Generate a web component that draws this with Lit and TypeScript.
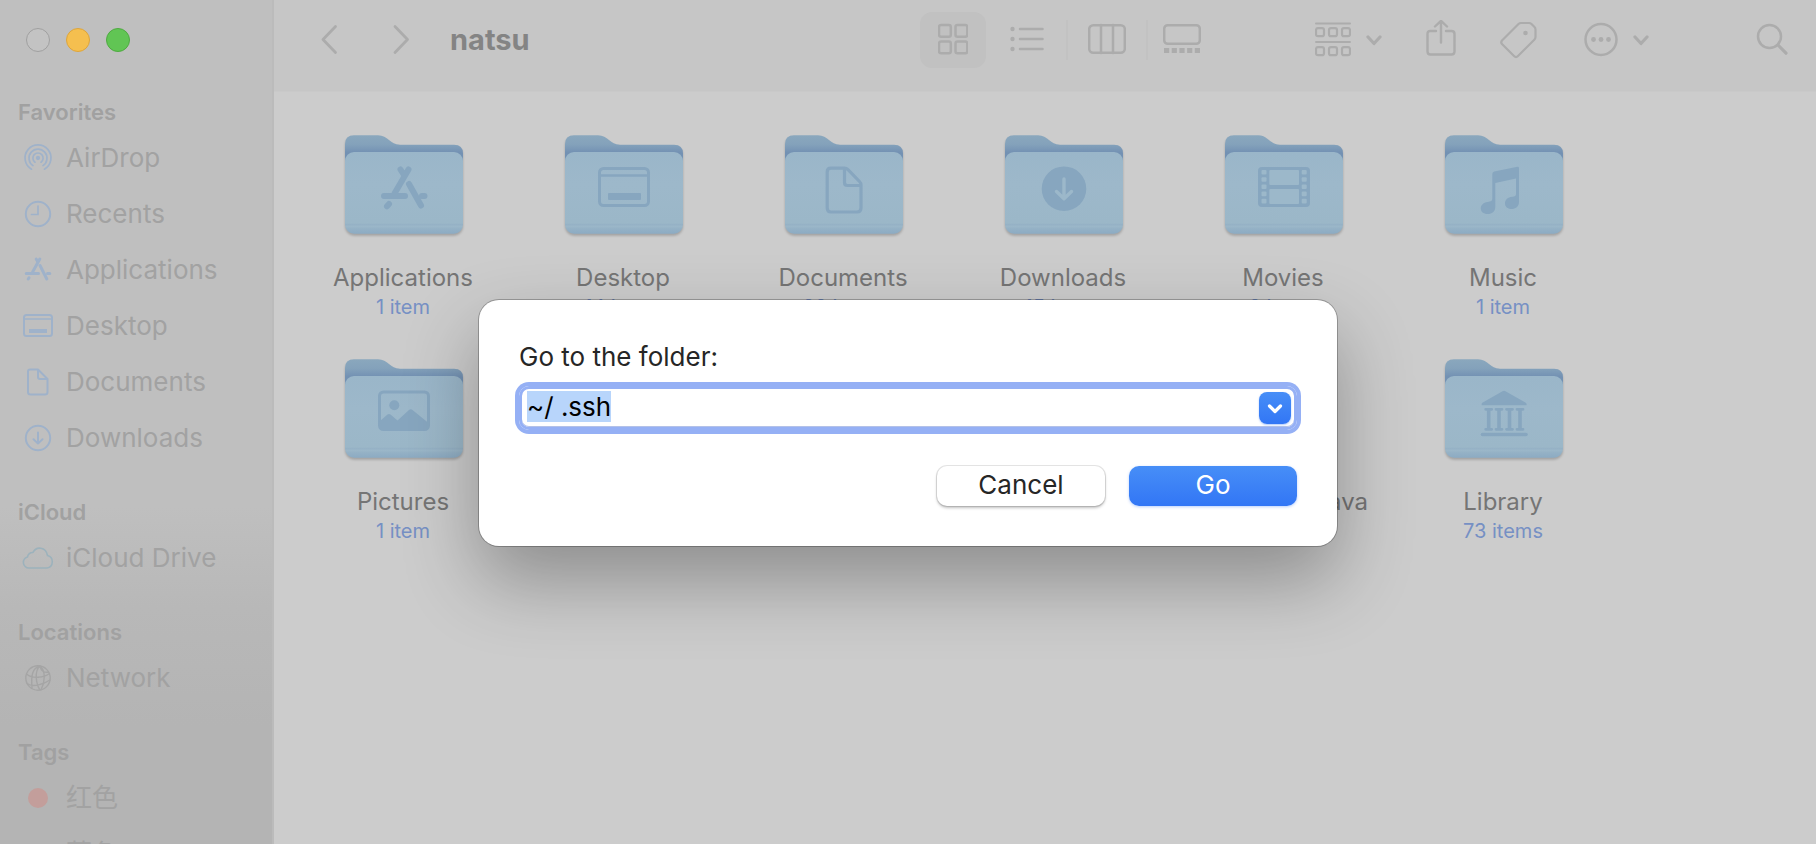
import { LitElement, html, svg, css, nothing } from "lit";
import { customElement, query } from "lit/decorators.js";

const appGlyph = svg`
  <g fill="none" stroke="currentColor" stroke-linecap="round" stroke-width="6">
    <path d="M63.500 34.500 49.500 58.500M55.500 34.500 59 40M39 61H60M77 61H79.500M64 49 76 70.500M44 69 42 71.200"/>
  </g>`;
const desktopGlyph = svg`
  <rect x="34.500" y="33.500" width="49" height="37" rx="4" fill="none" stroke="currentColor" stroke-width="3"/>
  <path d="M34 40.500H84" stroke="currentColor" stroke-width="2.500"/>
  <rect x="43" y="58" width="33" height="7" rx="1" fill="currentColor"/>`;
const docGlyph = svg`
  <path d="M46 33.200H59.500Q61.500 33.200 63 34.700L74.500 46.500Q76 48 76 50V73Q76 77 72 77H46Q42.200 77 42.200 73V37Q42.200 33.200 46 33.200ZM59.500 34V47.500Q59.500 50.500 62.500 50.500H76"
    fill="none" stroke="currentColor" stroke-width="3.200" stroke-linejoin="round"/>`;
const downloadGlyph = svg`
  <circle cx="59" cy="53.700" r="22.300" fill="currentColor"/>
  <path d="M59 44V63.500M51.500 56.500 59 63.800 66.500 56.500" fill="none" stroke="#9cb8ca" stroke-width="3.400" stroke-linecap="round" stroke-linejoin="round"/>`;
const movieGlyph = svg`
  <rect x="33" y="32" width="52" height="40" rx="4" fill="currentColor"/>
  <g fill="#9cb8ca">
    <rect x="44.300" y="35" width="29.700" height="15" rx="1"/>
    <rect x="44.300" y="54" width="29.700" height="15" rx="1"/>
    ${[35, 42.2, 49.4, 56.6, 63.8].map((y) => svg`
      <rect x="36.500" y=${y} width="5" height="4.600" rx="1"/>
      <rect x="76.700" y=${y} width="5" height="4.600" rx="1"/>`)}
  </g>`;
const musicGlyph = svg`
  <path d="M47.300 39Q47.300 37 49.200 36.500L72.500 31.800Q74 31.600 74 33.200V67C74 71.500 70.500 74 66.500 74C62.500 74 60 71.500 60 68.500C60 64.500 63 62.300 67 61.800C70 61.400 71 61 71 58.500V43.500L50.300 48V72C50.300 76.500 47 79 42.500 79C38.500 79 35.800 76.700 35.800 73.500C35.800 70 38.500 67.500 42.500 67C46 66.500 47.300 66 47.300 63.500Z" fill="currentColor"/>`;
const pictureGlyph = svg`
  <rect x="34.500" y="33" width="49" height="37.500" rx="4" fill="none" stroke="currentColor" stroke-width="3"/>
  <circle cx="49.300" cy="46.300" r="5" fill="currentColor"/>
  <path d="M34.500 62.500 42.500 55.500Q44 54.300 45.500 55.500L52.500 61.500 64 51Q65.700 49.600 67.500 51L83.500 64V68L81 70.500H37L34.500 68Z" fill="currentColor"/>`;
const libraryGlyph = svg`
  <path d="M57.500 32.300Q59 31.400 60.500 32.300L80.800 43.800Q82 44.600 81.500 46.300H36.700Q36.200 44.600 37.300 43.800Z" fill="currentColor"/>
  ${[43.7, 54, 64.5, 75].map((x) => svg`
    <path d=${`M${x - 3} 50.300H${x + 3}M${x - 3} 70.300H${x + 3}`} stroke="currentColor" stroke-width="2.800" stroke-linecap="round"/>
    <path d=${`M${x} 50V70`} stroke="currentColor" stroke-width="3.600"/>`)}
  <path d="M37.500 75.500H81" stroke="currentColor" stroke-width="3.600" stroke-linecap="round"/>`;

const folderIcon = (glyph: unknown) => html`
  <svg class="folder" viewBox="-2 -1 120 104" width="120" height="104" aria-hidden="true">
    <defs>
      <linearGradient id="back" x1="0" y1="0" x2="0" y2="1">
        <stop offset="0" stop-color="#8aa7bd"/><stop offset=".15" stop-color="#84a2bb"/><stop offset=".29" stop-color="#7391b3"/>
      </linearGradient>
      <linearGradient id="front" x1="0" y1="0" x2="0" y2="1">
        <stop offset="0" stop-color="#9ab6c9"/><stop offset=".4" stop-color="#9db8ca"/><stop offset=".87" stop-color="#9bb7c8"/>
        <stop offset=".89" stop-color="#95b1c5"/><stop offset=".91" stop-color="#9bb7c9"/><stop offset=".94" stop-color="#94b1c5"/><stop offset="1" stop-color="#8cabc3"/>
      </linearGradient>
    </defs>
    <path d="M0 9Q0 .3 9 .3H33C43 .3 45 9.800 55 9.800H109Q118 9.800 118 18.500V60H0Z" fill="url(#back)"/>
    <rect x="0" y="17" width="118" height="81.700" rx="9" fill="url(#front)"/>
    <g class="glyph">${glyph}</g>
  </svg>`;

const fileIcon = html`
  <svg class="folder" viewBox="0 0 120 104" width="120" height="104" aria-hidden="true">
    <path d="M28 3H76L96 23V101H28Z" fill="#d4d4d4"/>
  </svg>`;

const side = (body: unknown) => html`
  <svg class="side-icon" viewBox="0 0 32 32" width="32" height="32" fill="none" stroke="currentColor"
    stroke-width="2" stroke-linecap="round" stroke-linejoin="round" aria-hidden="true">${body}</svg>`;

const airdropIcon = side(svg`
  <g stroke-width="1.700"><circle cx="16" cy="16" r="1.300" fill="currentColor"/>
  <path d="M13 20.200A5.100 5.100 0 1 1 19 20.200M11 23.600A9 9 0 1 1 21 23.600M9.500 27.200A13 13 0 1 1 22.500 27.200"/></g>`);
const clockIcon = side(svg`<circle cx="16" cy="16" r="12.200"/><path d="M16 8V16.500H9.500" stroke-width="1.700"/>`);
const appsIcon = side(svg`
  <g stroke-width="3"><path d="M17.800 5 10.600 18M14.200 5 15.600 7.400M4.200 19.500H16.500M25.500 19.500H27.800M18 11.500 24.800 25M7 23.800 6.200 25"/></g>`);
const desktopIcon = side(svg`<rect x="2" y="5" width="28" height="21" rx="2.500"/><path d="M2 9H30" stroke-width="1.500"/><path d="M7 21H25" stroke-width="4" stroke-linecap="butt"/>`);
const docIcon = side(svg`<path d="M8 3.500H16L25.500 13V26Q25.500 28.500 23 28.500H8.500Q6 28.500 6 26V5.500Q6 3.500 8 3.500ZM16 4V11Q16 13 18 13H25"/>`);
const downIcon = side(svg`<circle cx="16" cy="16" r="12.200"/><path d="M16 10.500V21.500M11.500 17.300 16 21.600 20.500 17.300"/>`);
const cloudIcon = side(svg`<path d="M7 26A5.600 5.600 0 0 1 5.500 15A5 5 0 0 1 11 10.500C14 4 24 4.500 25.500 13.500A6.400 6.400 0 0 1 25 26Z" stroke-width="1.600"/>`);
const networkIcon = side(svg`
  <g stroke-width="1.400"><circle cx="16" cy="16" r="12.200"/>
  <path d="M18 4C12 9 14 22 18 28M18 4C10 6 9 14 10 26M18 4C24 9 23 20 19 28M4.500 12C10 17 22 16 27.500 11.500M5 21.500C11 26 22 22 28 18M18 4C19 9 22 11 26.500 10"/></g>`);
const tagDot = html`<span class="tag-dot"></span>`;

const sections = [
  { title: "Favorites", rows: [
    { label: "AirDrop", icon: airdropIcon, tone: "blue" },
    { label: "Recents", icon: clockIcon, tone: "blue" },
    { label: "Applications", icon: appsIcon, tone: "blue" },
    { label: "Desktop", icon: desktopIcon, tone: "blue" },
    { label: "Documents", icon: docIcon, tone: "blue" },
    { label: "Downloads", icon: downIcon, tone: "blue" },
  ] },
  { title: "iCloud", rows: [{ label: "iCloud Drive", icon: cloudIcon, tone: "teal" }] },
  { title: "Locations", rows: [{ label: "Network", icon: networkIcon, tone: "gray" }] },
  { title: "Tags", rows: [
    { label: "红色", icon: tagDot, tone: "red" },
    { label: "蓝色", icon: tagDot, tone: "blue" },
  ] },
];

const entries = [
  { name: "Applications", count: "1 item", icon: folderIcon(appGlyph), place: "" },
  { name: "Desktop", count: "14 items", icon: folderIcon(desktopGlyph), place: "" },
  { name: "Documents", count: "22 items", icon: folderIcon(docGlyph), place: "" },
  { name: "Downloads", count: "15 items", icon: folderIcon(downloadGlyph), place: "" },
  { name: "Movies", count: "2 items", icon: folderIcon(movieGlyph), place: "" },
  { name: "Music", count: "1 item", icon: folderIcon(musicGlyph), place: "" },
  { name: "Pictures", count: "1 item", icon: folderIcon(pictureGlyph), place: "" },
  { name: "helloworld.java", count: "", icon: fileIcon, place: "fifth" },
  { name: "Library", count: "73 items", icon: folderIcon(libraryGlyph), place: "" },
];

const tool = (w: number, body: unknown) => html`
  <svg viewBox=${`0 0 ${w} 40`} width=${w} height="40" fill="none" stroke="currentColor" stroke-width="2.500"
    stroke-linecap="round" stroke-linejoin="round" aria-hidden="true">${body}</svg>`;

const smallChevron = svg`<path d="M2 17 8 23.500 14 17" stroke-width="3.200"/>`;
const gridIcon = tool(30, svg`
  ${[[1, 5], [17.5, 5], [1, 21.5], [17.5, 21.5]].map(([x, y]) => svg`<rect x=${x} y=${y} width="11.800" height="11.800" rx="2"/>`)}`);
const listIcon = tool(34, svg`
  ${[9, 19, 29].map((y) => svg`<circle cx="2.500" cy=${y} r="2.200" fill="currentColor" stroke="none"/><path d=${`M10 ${y}H32.500`}/>`)}`);
const columnsIcon = tool(38, svg`<rect x="1.200" y="5.200" width="35.600" height="27.600" rx="4"/><path d="M13 5V33M25 5V33"/>`);
const galleryIcon = tool(38, svg`
  <rect x="1.200" y="5.200" width="35.600" height="18.600" rx="3.500"/>
  ${[1, 8.7, 16.4, 24.1, 31.8].map((x) => svg`<rect x=${x} y="28" width="5.200" height="5" fill="currentColor" stroke="none"/>`)}`);
const groupIcon = tool(36, svg`
  <path d="M1 3.500H35M1 22H35" stroke-width="2"/>
  ${[8.2, 27.2].map((y) => [1, 14, 27].map((x) => svg`<rect x=${x} y=${y} width="8" height="8" rx="2" stroke-width="2.200"/>`))}`);
const shareIcon = tool(30, svg`<path d="M10 11H4.500Q1.500 11 1.500 14V31.500Q1.500 34.500 4.500 34.500H25.500Q28.500 34.500 28.500 31.500V14Q28.500 11 25.500 11H20M15 22.500V1M9 6.500 15 .8 21 6.500" stroke-width="2.400"/>`);
const tagIcon = tool(40, svg`
  <path d="M21 3H29Q30.500 3 31.500 4L34.500 7Q35.500 8 35.500 9.500V17Q35.500 18.500 34.500 19.500L18 36Q16 38 14 36L2 24Q.5 22.500 2 20.500L18.500 4Q19.500 3 21 3Z" stroke-width="2.200"/>
  <circle cx="25.500" cy="13" r="2.300" fill="currentColor" stroke="none"/>`);
const moreIcon = tool(34, svg`
  <circle cx="17" cy="19.500" r="15.500"/>
  ${[9.5, 17, 24.5].map((x) => svg`<circle cx=${x} cy="19.500" r="2.400" fill="currentColor" stroke="none"/>`)}`);
const searchIcon = tool(32, svg`<circle cx="13.500" cy="16.500" r="11.500"/><path d="M22 25 30 33.200" stroke-width="3.200"/>`);

@customElement("app-root")
export class AppRoot extends LitElement {
  @query(".path") private pathInput!: HTMLInputElement;

  static styles = css`
    :host {
      display: block;
      font-family: Inter, "Noto Sans CJK SC", sans-serif;
      color: #767676;
    }
    * { box-sizing: border-box; }
    svg { display: block; flex: none; }
    button { border: 0; padding: 0; margin: 0; background: none; font: inherit; color: inherit; }
    .window {
      display: grid;
      grid-template-columns: 274px minmax(0, 1fr);
      height: 100vh;
      overflow: hidden;
      background: #ccc;
    }
    .sidebar {
      min-height: 0;
      overflow: hidden;
      background: linear-gradient(#bfbfbf 60%, #b8b8b8 72%, #b4b4b4 86%);
      border-right: 2px solid #bbb;
    }
    .lights { display: flex; gap: 16px; height: 94px; padding: 28px 26px; }
    .light { width: 24px; height: 24px; border-radius: 50%; border: 1px solid #a0a0a0; background: #c3c3c3; }
    .light.minimize { background: #f5bf4f; border-color: #dda53c; }
    .light.zoom { background: #61c554; border-color: #4faa41; }
    .section { margin-bottom: 28px; }
    .section-title { margin: 0; padding-left: 18px; font-size: 22px; font-weight: 600; line-height: 36px; color: #a1a1a1; }
    .rows { list-style: none; margin: 0; padding: 0; }
    .row { display: flex; align-items: center; gap: 12px; height: 56px; padding-left: 22px; font-size: 26px; line-height: 32px; color: #a2a2a2; text-decoration: none; }
    .row-icon { display: grid; place-items: center; width: 32px; height: 32px; flex: none; }
    .blue { color: #9fb2ca; }
    .teal { color: #9cb2bc; }
    .gray { color: #a5a5a5; }
    .red { color: #c39e9b; }
    .tag-dot { width: 20px; height: 20px; border-radius: 50%; background: currentColor; }
    .main { display: flex; flex-direction: column; min-width: 0; }
    .toolbar {
      display: flex;
      align-items: center;
      height: 92px;
      padding: 0 28px 12px 46px;
      background: #c6c6c6;
      border-bottom: 1px solid #c9c9c9;
      color: #acacac;
      flex: none;
    }
    .nav { display: flex; gap: 54px; }
    .title { flex: 1; margin: 0 0 0 40px; font-size: 29px; font-weight: 700; line-height: 40px; color: #848484; }
    .views { display: flex; align-items: center; margin-right: 99px; }
    .view { display: grid; place-items: center; width: 80px; height: 40px; border-left: 2px solid #c2c2c2; }
    .view.active { width: 66px; height: 56px; border: 0; border-radius: 12px; background: #c1c1c1; }
    .view.active + .view { border-color: transparent; }
    .view:last-child { width: 70px; }
    .actions { display: flex; gap: 44px; }
    .with-menu { display: flex; gap: 15px; }
    .search { margin-left: 107px; }
    .files {
      display: grid;
      grid-template-columns: repeat(auto-fill, 220px);
      list-style: none;
      margin: 0;
      padding: 42px 20px 0 19px;
    }
    .file { display: flex; flex-direction: column; align-items: center; height: 224px; }
    .fifth { grid-column: 5; }
    .folder { filter: drop-shadow(0 2px 1px rgba(0, 0, 0, 0.2)); }
    .glyph { color: #87a6bf; }
    .name { margin-top: 25px; font-size: 24px; line-height: 30px; white-space: nowrap; color: #757575; }
    .count { font-size: 20px; line-height: 28px; color: #7690c4; }
    .overlay {
      position: absolute;
      inset: 0;
      display: flex;
      justify-content: center;
      align-items: flex-start;
      padding: 300px 24px 0;
    }
    .dialog {
      display: flex;
      flex-direction: column;
      width: 100%;
      max-width: 858px;
      padding: 40px;
      border-radius: 20px;
      background: #fff;
      box-shadow: 0 0 0 1px rgba(0, 0, 0, 0.25), 0 34px 76px rgba(0, 0, 0, 0.31);
      font-size: 26px;
      color: #262626;
    }
    .prompt { margin-bottom: 12px; line-height: 34px; }
    .combo {
      display: flex;
      align-items: flex-start;
      height: 44px;
      padding: 0 3px 0 5px;
      border: 3px solid #95b0f5;
      border-radius: 10px;
      box-shadow: 0 0 0 4px #95b0f5, inset 0 -1px 0 #b3c1e8;
    }
    .path { flex: 1; min-width: 0; height: 34px; padding: 0; border: 0; outline: 0; background: none; font: inherit; color: #000; }
    .path::selection { background: #b8d5fb; color: #000; }
    .drop {
      display: grid;
      place-items: center;
      width: 32px;
      height: 32px;
      margin-top: 3px;
      border-radius: 8px;
      background: linear-gradient(#478ef7, #3276f5);
      box-shadow: 0 1px 2px rgba(50, 118, 245, 0.4);
      color: #fff;
    }
    .buttons { display: flex; justify-content: flex-end; gap: 24px; margin-top: 36px; }
    .button { width: 168px; height: 40px; padding-bottom: 2px; border-radius: 10px; line-height: 38px; background: #fff; box-shadow: 0 0 0 1px rgba(0, 0, 0, 0.1), 0 2px 3px rgba(0, 0, 0, 0.25); }
    .button.primary { background: linear-gradient(#478ef7, #3276f5); color: #fff; box-shadow: 0 1px 3px rgba(50, 118, 245, 0.35); }
  `;

  protected firstUpdated() {
    this.pathInput.focus();
    this.pathInput.select();
  }

  render() {
    return html`
      <div class="window">
        <nav class="sidebar" aria-label="Sidebar">
          <div class="lights">
            <button class="light" aria-label="Close"></button>
            <button class="light minimize" aria-label="Minimize"></button>
            <button class="light zoom" aria-label="Zoom"></button>
          </div>
          ${sections.map((s) => html`
            <section class="section">
              <h2 class="section-title">${s.title}</h2>
              <ul class="rows">
                ${s.rows.map((r) => html`
                  <li><a class="row" href="#"><span class="row-icon ${r.tone}">${r.icon}</span>${r.label}</a></li>`)}
              </ul>
            </section>`)}
        </nav>
        <main class="main">
          <header class="toolbar">
            <div class="nav">
              <button aria-label="Back">${tool(18, svg`<path d="M15.500 6.500 3 19.500 15.500 32.500" stroke-width="2.800"/>`)}</button>
              <button aria-label="Forward">${tool(18, svg`<path d="M3 6.500 15.500 19.500 3 32.500" stroke-width="2.800"/>`)}</button>
            </div>
            <h1 class="title">natsu</h1>
            <div class="views">
              <button class="view active" aria-label="Icons">${gridIcon}</button>
              <button class="view" aria-label="List">${listIcon}</button>
              <button class="view" aria-label="Columns">${columnsIcon}</button>
              <button class="view" aria-label="Gallery">${galleryIcon}</button>
            </div>
            <div class="actions">
              <button class="with-menu" aria-label="Group">${groupIcon}${tool(16, smallChevron)}</button>
              <button aria-label="Share">${shareIcon}</button>
              <button aria-label="Edit tags">${tagIcon}</button>
              <button class="with-menu" aria-label="More">${moreIcon}${tool(16, smallChevron)}</button>
            </div>
            <button class="search" aria-label="Search">${searchIcon}</button>
          </header>
          <ul class="files">
            ${entries.map((e) => html`
              <li class="file ${e.place}">
                ${e.icon}
                <span class="name">${e.name}</span>
                ${e.count ? html`<span class="count">${e.count}</span>` : nothing}
              </li>`)}
          </ul>
        </main>
      </div>
      <div class="overlay">
        <form class="dialog" role="dialog" @submit=${(ev: Event) => ev.preventDefault()}>
          <label class="prompt" for="path">Go to the folder:</label>
          <div class="combo">
            <input class="path" id="path" type="text" value="~/ .ssh" autocomplete="off" spellcheck="false" />
            <button class="drop" type="button" aria-label="Recent folders">
              <svg viewBox="0 0 32 32" width="32" height="32" fill="none" stroke="#fff" stroke-width="3.200" stroke-linecap="round" stroke-linejoin="round" aria-hidden="true"><path d="M10.500 14 16 19.500 21.500 14"/></svg>
            </button>
          </div>
          <div class="buttons">
            <button class="button" type="button">Cancel</button>
            <button class="button primary" type="submit">Go</button>
          </div>
        </form>
      </div>
    `;
  }
}
